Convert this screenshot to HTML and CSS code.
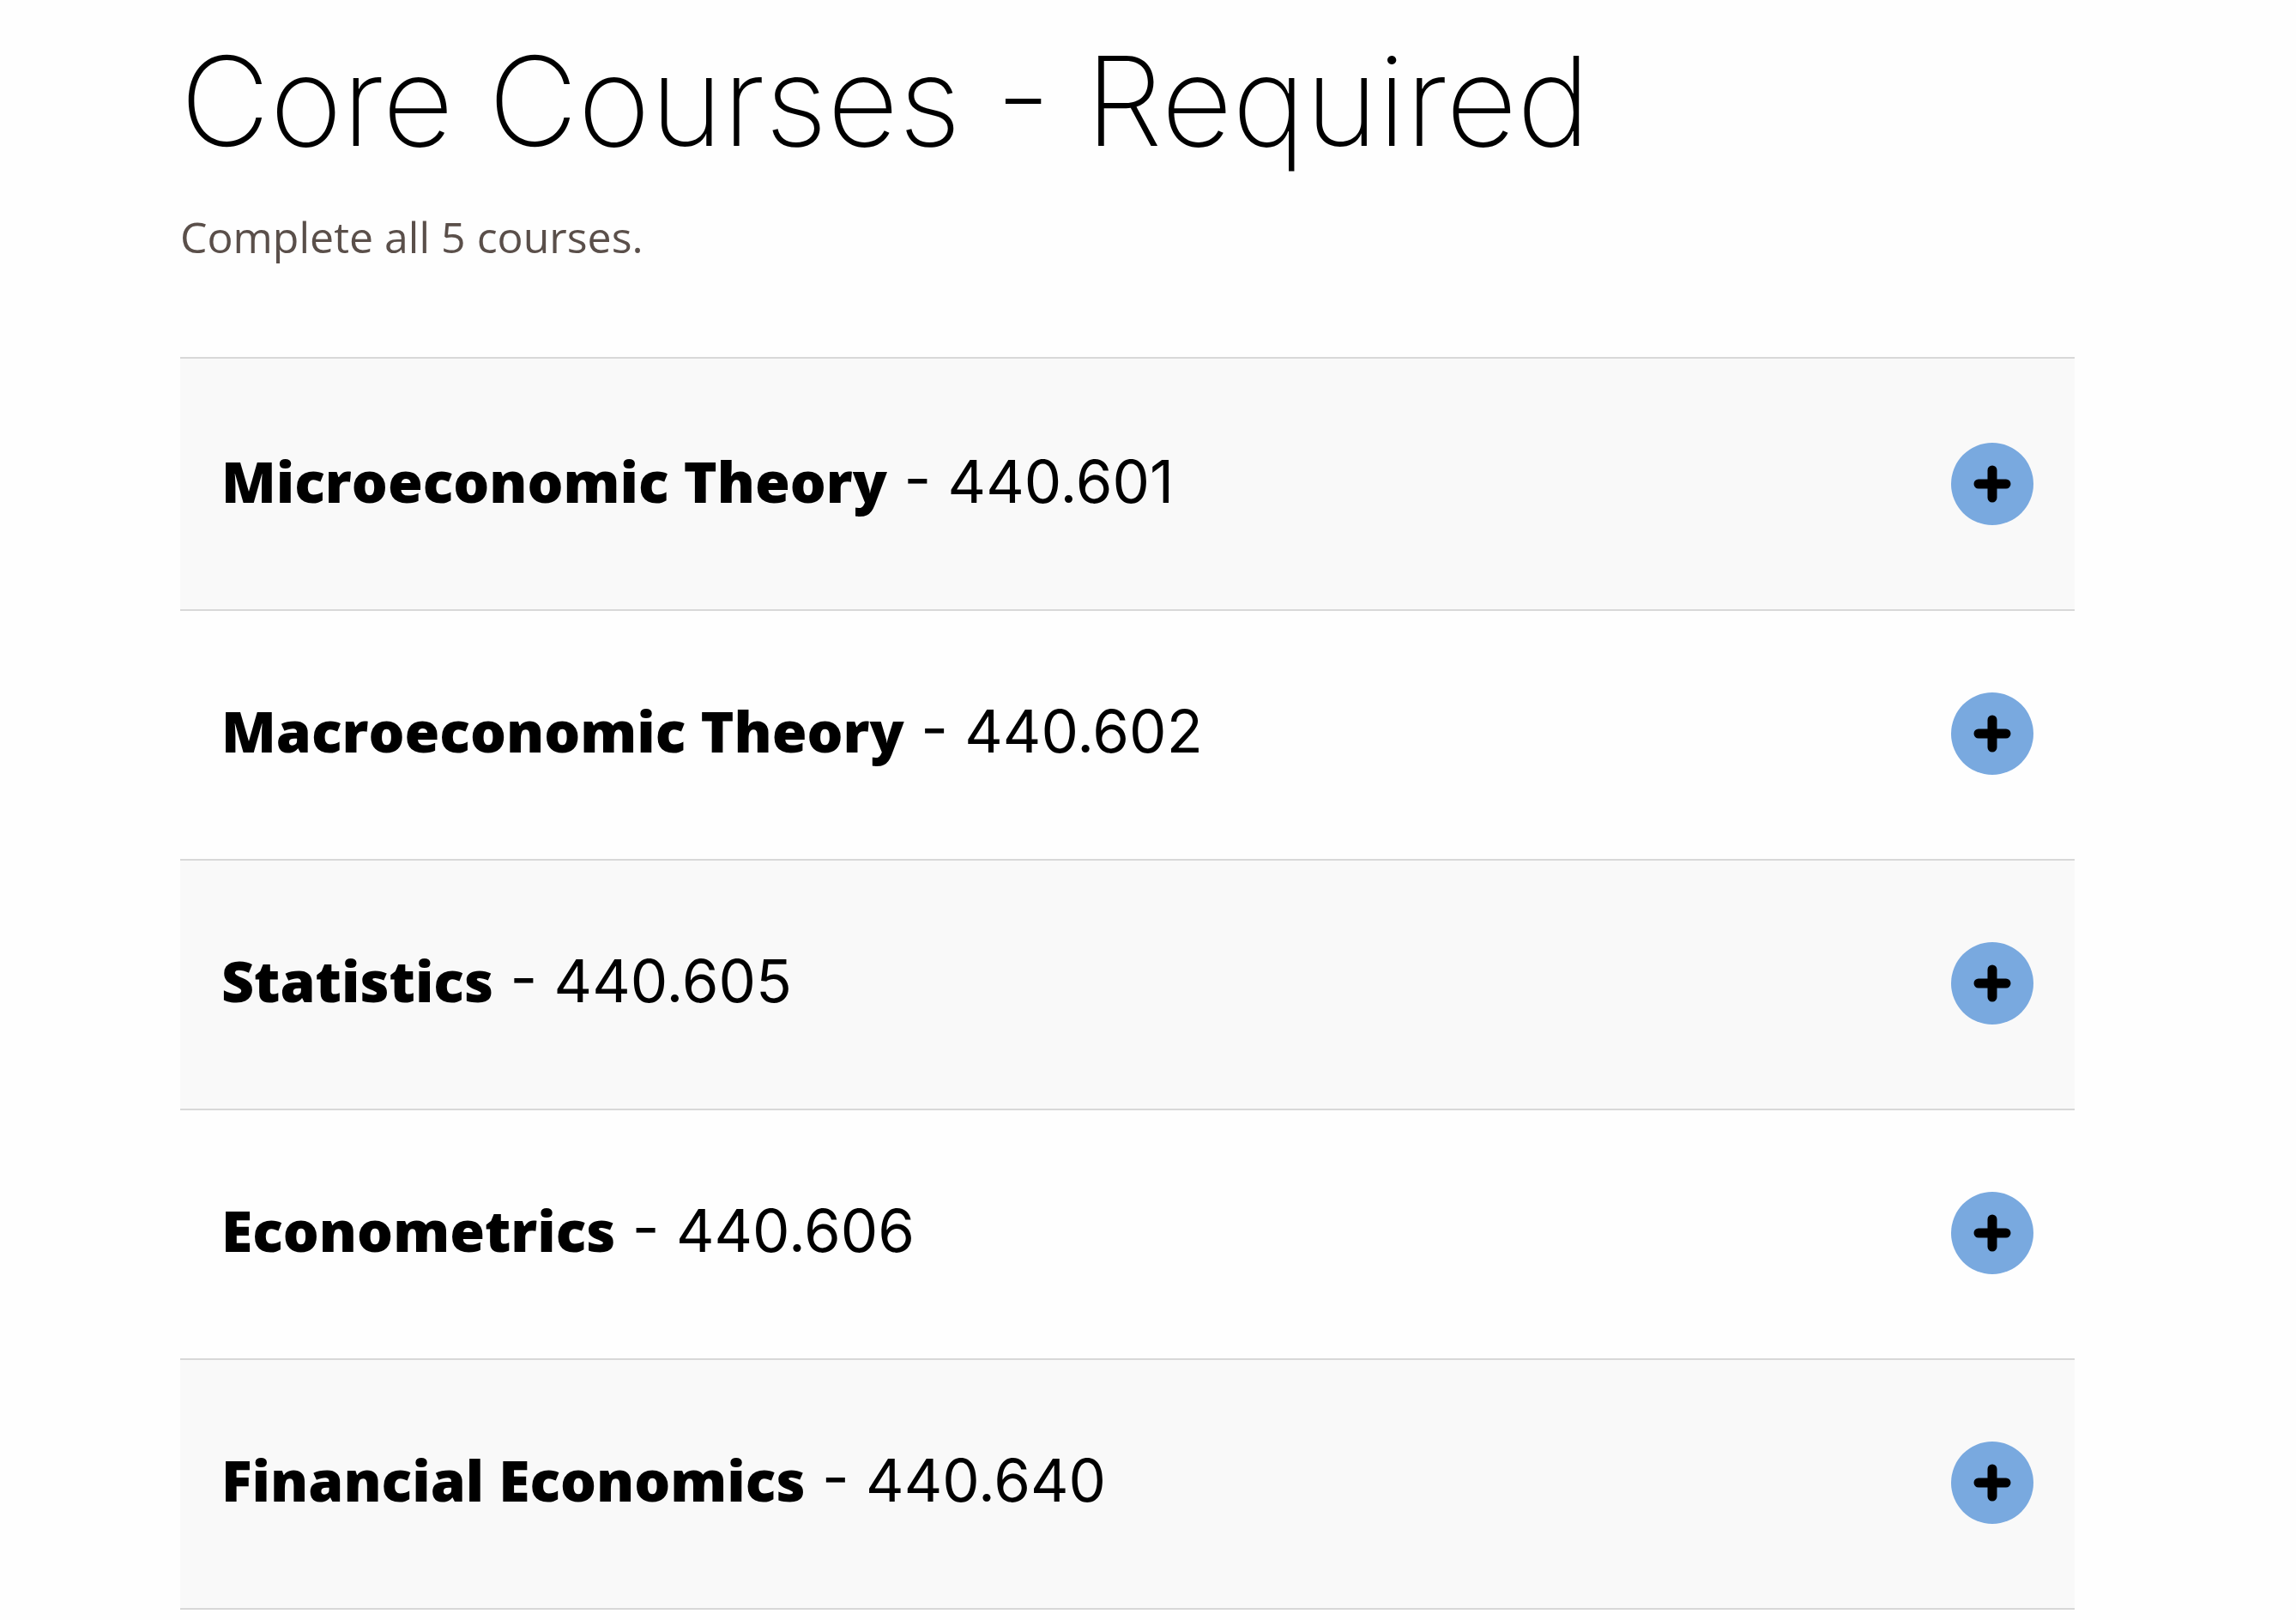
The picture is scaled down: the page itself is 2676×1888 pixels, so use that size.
FILE: index.html
```html
<!DOCTYPE html>
<html lang="en">
<head>
    <meta charset="UTF-8">
    <meta name="viewport" content="width=device-width, initial-scale=1.0">
    <title>Core Courses - Required</title>
    <link rel="stylesheet" href="styles.css">
</head>
<body>
    <main class="courses">
        <h2 class="courses-title">Core Courses - Required</h2>
        <p class="courses-intro">Complete all 5 courses.</p>
        <ul class="accordion">
            <li class="accordion-item">
                <button type="button" class="accordion-toggle" aria-expanded="false">
                    <span class="course"><strong>Microeconomic Theory</strong> - 440.601</span>
                    <svg class="icon" viewBox="0 0 96 96" aria-hidden="true"><circle cx="48" cy="48" r="48"/><path d="M48 32v32M32 48h32"/></svg>
                </button>
            </li>
            <li class="accordion-item">
                <button type="button" class="accordion-toggle" aria-expanded="false">
                    <span class="course"><strong>Macroeconomic Theory</strong> - 440.602</span>
                    <svg class="icon" viewBox="0 0 96 96" aria-hidden="true"><circle cx="48" cy="48" r="48"/><path d="M48 32v32M32 48h32"/></svg>
                </button>
            </li>
            <li class="accordion-item">
                <button type="button" class="accordion-toggle" aria-expanded="false">
                    <span class="course"><strong>Statistics</strong> - 440.605</span>
                    <svg class="icon" viewBox="0 0 96 96" aria-hidden="true"><circle cx="48" cy="48" r="48"/><path d="M48 32v32M32 48h32"/></svg>
                </button>
            </li>
            <li class="accordion-item">
                <button type="button" class="accordion-toggle" aria-expanded="false">
                    <span class="course"><strong>Econometrics</strong> - 440.606</span>
                    <svg class="icon" viewBox="0 0 96 96" aria-hidden="true"><circle cx="48" cy="48" r="48"/><path d="M48 32v32M32 48h32"/></svg>
                </button>
            </li>
            <li class="accordion-item">
                <button type="button" class="accordion-toggle" aria-expanded="false">
                    <span class="course"><strong>Financial Economics</strong> - 440.640</span>
                    <svg class="icon" viewBox="0 0 96 96" aria-hidden="true"><circle cx="48" cy="48" r="48"/><path d="M48 32v32M32 48h32"/></svg>
                </button>
            </li>
        </ul>
    </main>
</body>
</html>
```

FILE: styles.css
```css
* {
    box-sizing: border-box;
}
body {
    margin: 0;
    background-color: #fefefe;
    color: #000;
    font-family: 'Open Sans', 'Noto Sans', sans-serif;
}
.courses {
    padding: 38px 258px 12px 210px;
}
.courses-title {
    margin: 0;
    font-family: Inter, Lato, sans-serif;
    font-size: 144px;
    font-weight: 200;
    line-height: 160px;
}
.courses-intro {
    margin: 44px 0 106px;
    font-size: 50px;
    line-height: 68px;
    color: #5a4f4a;
}
.accordion {
    margin: 0;
    padding: 0;
    list-style: none;
    border-top: 2px solid #d8d8d8;
}
.accordion-item {
    border-bottom: 2px solid #d8d8d8;
}
.accordion-item:nth-child(odd) {
    background-color: #f9f9f9;
}
.accordion-toggle {
    display: flex;
    justify-content: space-between;
    align-items: center;
    width: 100%;
    padding: 95px 48px 98px;
    border: none;
    background: none;
    color: inherit;
    text-align: left;
    cursor: pointer;
}
.accordion-item:first-child .accordion-toggle {
    padding-top: 98px;
}
.course {
    padding-bottom: 8px;
    font-family: Inter, sans-serif;
    font-size: 69px;
    line-height: 84px;
}
.course strong {
    font-family: 'Open Sans', 'Noto Sans', sans-serif;
    font-size: 66px;
    font-weight: 800;
}
.icon {
    flex: none;
    width: 96px;
    height: 96px;
}
.icon circle {
    fill: #79a9df;
}
.icon path {
    fill: none;
    stroke: #000;
    stroke-width: 11;
    stroke-linecap: round;
}
.accordion-toggle:hover .icon circle {
    fill: #68ace5;
}
```
